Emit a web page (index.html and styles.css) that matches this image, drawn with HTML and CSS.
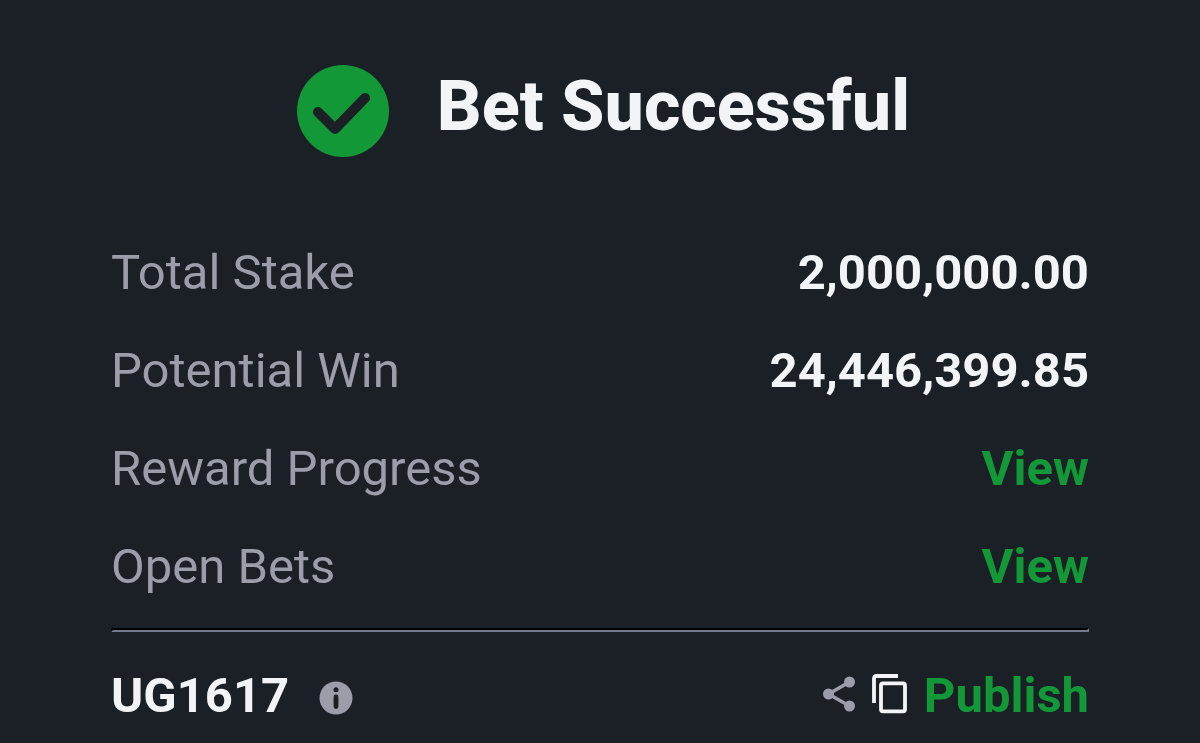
FILE: index.html
```
<!DOCTYPE html>
<html lang="en">
<head>
  <meta charset="UTF-8">
  <meta name="viewport" content="width=device-width, initial-scale=1.0">
  <title>Bet Successful</title>
  <link rel="stylesheet" href="styles.css">
</head>
<body>
  <main class="container">
    <header class="header">
      <svg class="check-icon" viewBox="0 0 92 92" aria-hidden="true">
        <circle cx="46" cy="46" r="46" fill="#129837"/>
        <path d="M21 47 L38 64 L68 33" fill="none" stroke="#1b1f26" stroke-width="10" stroke-linecap="round" stroke-linejoin="round"/>
      </svg>
      <h1>Bet Successful</h1>
    </header>

    <dl class="details">
      <div class="row">
        <dt>Total Stake</dt>
        <dd>2,000,000.00</dd>
      </div>
      <div class="row">
        <dt>Potential Win</dt>
        <dd>24,446,399.85</dd>
      </div>
      <div class="row">
        <dt>Reward Progress</dt>
        <dd><a href="#rewards">View</a></dd>
      </div>
      <div class="row">
        <dt>Open Bets</dt>
        <dd><a href="#bets">View</a></dd>
      </div>
    </dl>

    <hr>

    <footer class="footer">
      <div class="code">
        <span>UG1617</span>
        <button type="button" class="icon-btn info-btn" aria-label="Code info">
          <svg width="34" height="34" viewBox="0 0 34 34">
            <circle cx="17" cy="17" r="16.5" fill="#9b9da9"/>
            <circle cx="17" cy="8.8" r="2.5" fill="#1b1f26"/>
            <path d="M17 16 V25.5" stroke="#1b1f26" stroke-width="4.8" stroke-linecap="round"/>
          </svg>
        </button>
      </div>
      <div class="actions">
        <button type="button" class="icon-btn" aria-label="Share">
          <svg width="32" height="36" viewBox="0 0 32 36">
            <path d="M26.5 6 L5.5 18 L26.5 30" fill="none" stroke="#9b9da9" stroke-width="3.6"/>
            <circle cx="26.5" cy="6" r="5.5" fill="#9b9da9"/>
            <circle cx="5.5" cy="18" r="5.5" fill="#9b9da9"/>
            <circle cx="26.5" cy="30" r="5.5" fill="#9b9da9"/>
          </svg>
        </button>
        <button type="button" class="icon-btn" aria-label="Copy">
          <svg width="35" height="40" viewBox="0 0 35 40" fill="none" stroke="#f3f4f8" stroke-width="3.8">
            <path d="M2 29 V4.5 Q2 2 4.5 2 H26"/>
            <rect x="9" y="9.3" width="24" height="28" rx="2"/>
          </svg>
        </button>
        <button type="button" class="publish-btn">Publish</button>
      </div>
    </footer>
  </main>
</body>
</html>
```

FILE: styles.css
```
* {
  box-sizing: border-box;
}
body {
  margin: 0;
  background-color: #1b1f26;
  color: #f3f4f8;
  font-family: Roboto, Arial, sans-serif;
  font-size: 49px;
  line-height: 56px;
}
.container {
  padding: 65px 111px 20px;
}
.header {
  display: flex;
  justify-content: center;
  gap: 48px;
  padding-left: 7px;
}
.check-icon {
  width: 92px;
  height: 92px;
}
h1 {
  margin: 0;
  font-size: 70px;
  line-height: 82px;
  font-weight: 800;
}
.details {
  display: flex;
  flex-direction: column;
  gap: 42px;
  margin: 88px 0 33px;
}
.row {
  display: flex;
  justify-content: space-between;
}
dt {
  color: #9b9da9;
}
dd {
  margin: 0;
  font-weight: 700;
}
a {
  color: #129837;
  text-decoration: none;
}
hr {
  margin: 0;
  border: 2px solid;
  border-color: #000 #75798f #75798f #000;
}
.footer {
  display: flex;
  justify-content: space-between;
  align-items: center;
  margin-top: 36px;
}
.code {
  display: flex;
  align-items: center;
  gap: 30px;
  font-weight: 700;
}
.actions {
  display: flex;
  align-items: center;
  gap: 17px;
}
button {
  padding: 0;
  border: 0;
  background: none;
  cursor: pointer;
}
.icon-btn svg {
  display: block;
}
.info-btn {
  padding-top: 4px;
}
.actions .icon-btn {
  padding-bottom: 4px;
}
.publish-btn {
  color: #129837;
  font: inherit;
  font-weight: 700;
}
```
